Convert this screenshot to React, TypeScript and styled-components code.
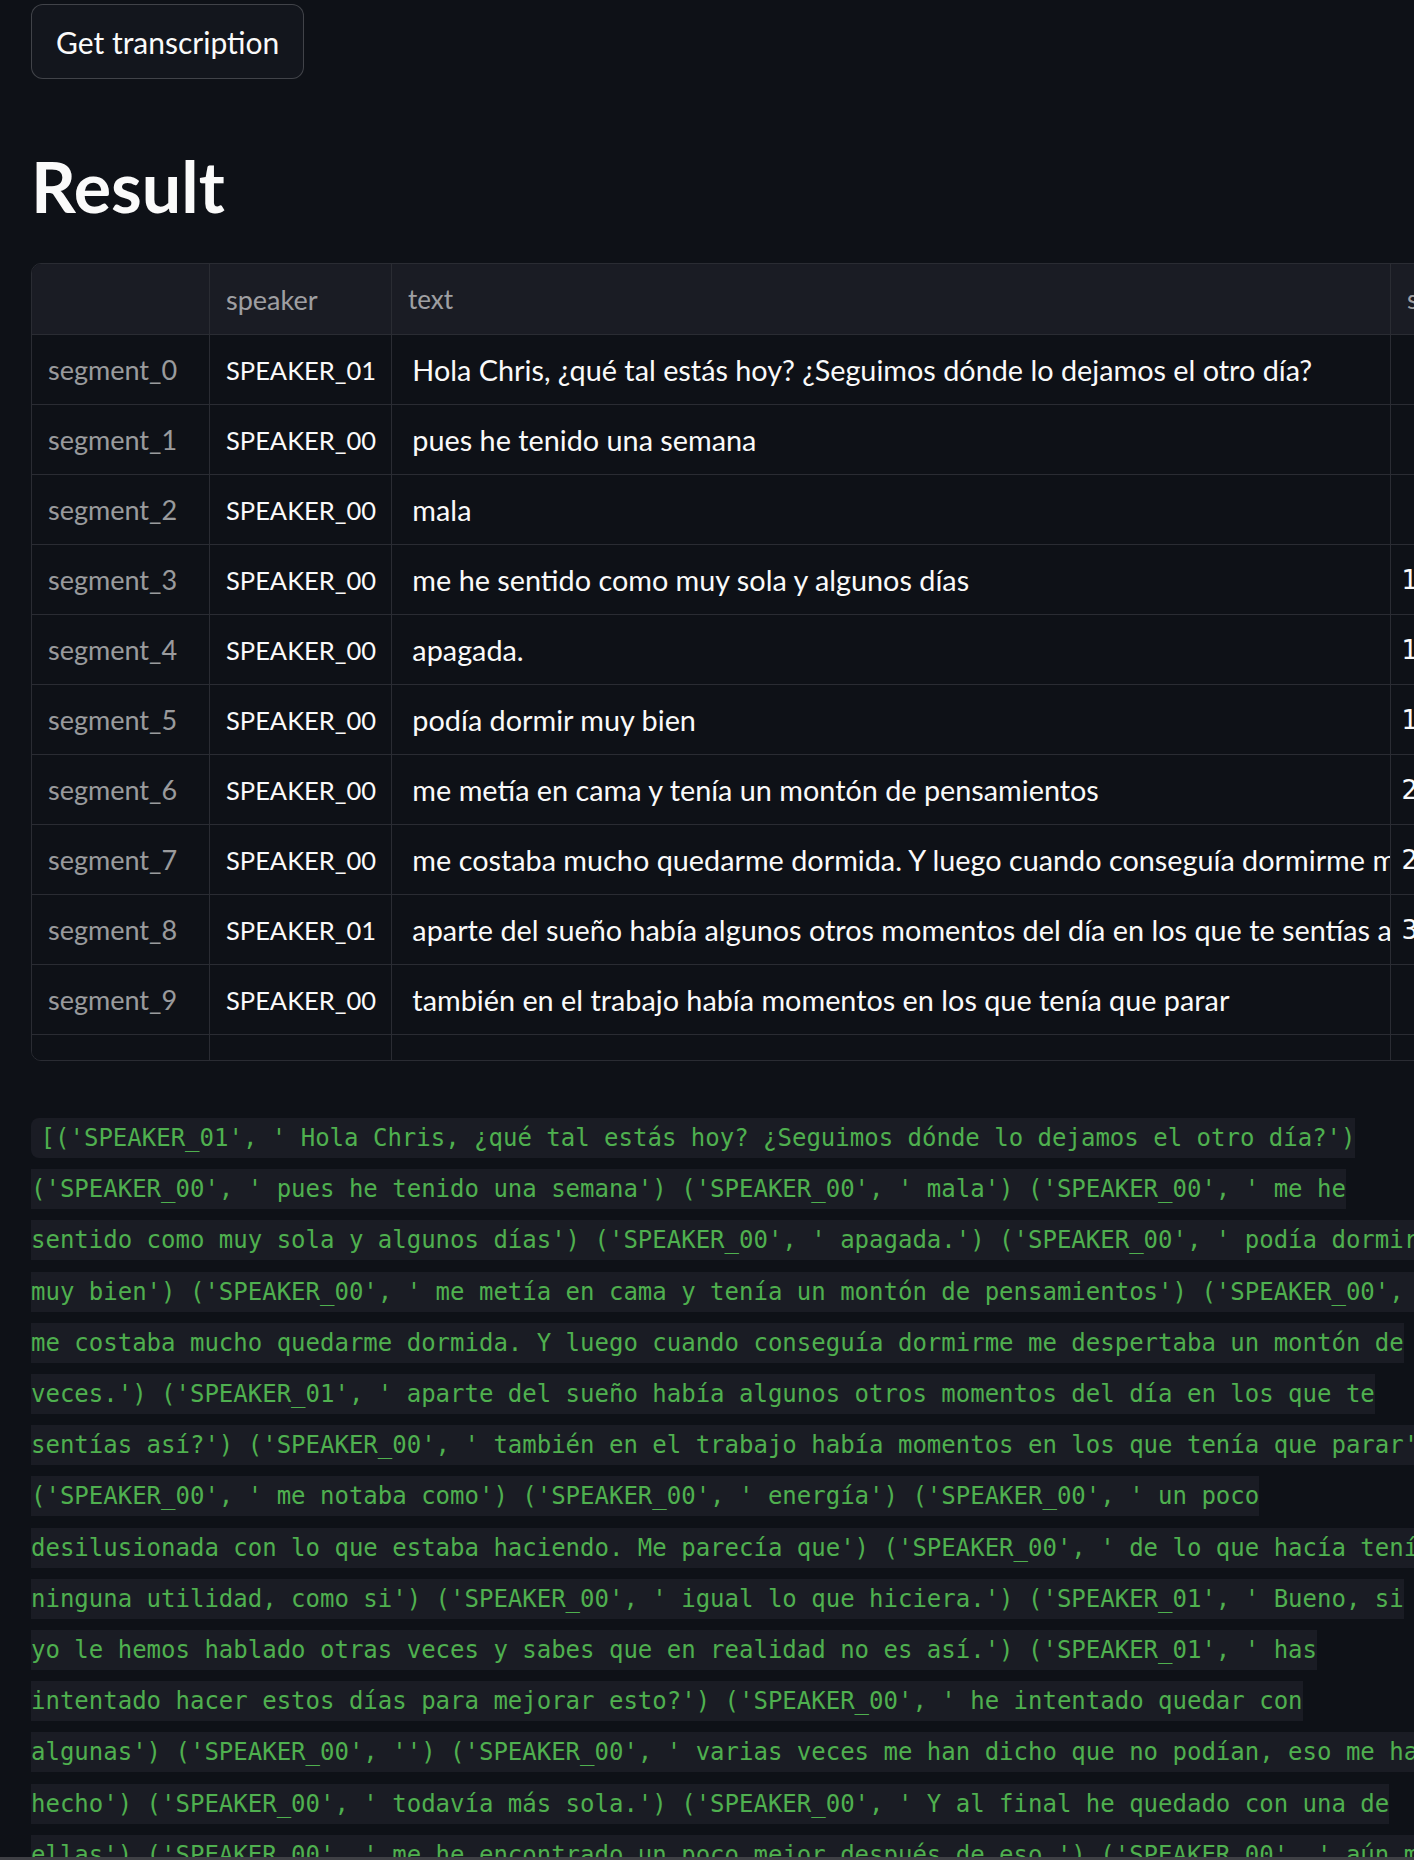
import styled, { createGlobalStyle } from "styled-components";

type Segment = {
  speaker: string;
  text: string;
  start: string;
};

const segments: Segment[] = [
  { speaker: "SPEAKER_01", text: " Hola Chris, ¿qué tal estás hoy? ¿Seguimos dónde lo dejamos el otro día?", start: "0.0310" },
  { speaker: "SPEAKER_00", text: " pues he tenido una semana", start: "4.6540" },
  { speaker: "SPEAKER_00", text: " mala", start: "7.1300" },
  { speaker: "SPEAKER_00", text: " me he sentido como muy sola y algunos días", start: "10.2500" },
  { speaker: "SPEAKER_00", text: " apagada.", start: "13.4300" },
  { speaker: "SPEAKER_00", text: " podía dormir muy bien", start: "15.9800" },
  { speaker: "SPEAKER_00", text: " me metía en cama y tenía un montón de pensamientos", start: "20.1600" },
  {
    speaker: "SPEAKER_00",
    text: " me costaba mucho quedarme dormida. Y luego cuando conseguía dormirme me despertaba un montón de veces.",
    start: "25.3400",
  },
  {
    speaker: "SPEAKER_01",
    text: " aparte del sueño había algunos otros momentos del día en los que te sentías así?",
    start: "31.0900",
  },
  { speaker: "SPEAKER_00", text: " también en el trabajo había momentos en los que tenía que parar", start: "9.8700" },
  { speaker: "SPEAKER_00", text: " me notaba como", start: "4.5100" },
  { speaker: "SPEAKER_00", text: " energía", start: "4.0200" },
];

const transcript: [string, string][] = [
  ["SPEAKER_01", " Hola Chris, ¿qué tal estás hoy? ¿Seguimos dónde lo dejamos el otro día?"],
  ["SPEAKER_00", " pues he tenido una semana"],
  ["SPEAKER_00", " mala"],
  ["SPEAKER_00", " me he sentido como muy sola y algunos días"],
  ["SPEAKER_00", " apagada."],
  ["SPEAKER_00", " podía dormir muy bien"],
  ["SPEAKER_00", " me metía en cama y tenía un montón de pensamientos"],
  ["SPEAKER_00", " me costaba mucho quedarme dormida. Y luego cuando conseguía dormirme me despertaba un montón de veces."],
  ["SPEAKER_01", " aparte del sueño había algunos otros momentos del día en los que te sentías así?"],
  ["SPEAKER_00", " también en el trabajo había momentos en los que tenía que parar"],
  ["SPEAKER_00", " me notaba como"],
  ["SPEAKER_00", " energía"],
  ["SPEAKER_00", " un poco desilusionada con lo que estaba haciendo. Me parecía que"],
  ["SPEAKER_00", " de lo que hacía tenía ninguna utilidad, como si"],
  ["SPEAKER_00", " igual lo que hiciera."],
  ["SPEAKER_01", " Bueno, si yo le hemos hablado otras veces y sabes que en realidad no es así."],
  ["SPEAKER_01", " has intentado hacer estos días para mejorar esto?"],
  ["SPEAKER_00", " he intentado quedar con algunas"],
  ["SPEAKER_00", ""],
  ["SPEAKER_00", " varias veces me han dicho que no podían, eso me ha hecho"],
  ["SPEAKER_00", " todavía más sola."],
  ["SPEAKER_00", " Y al final he quedado con una de ellas"],
  ["SPEAKER_00", " me he encontrado un poco mejor después de eso."],
  ["SPEAKER_00", " aún me cuesta un poco, pero poco a poco voy mejorando."],
];

const transcriptText =
  "[" + transcript.map(([who, said]) => `('${who}', '${said}')`).join(" ") + "]";

const GlobalStyle = createGlobalStyle`
  html, body {
    margin: 0;
    padding: 0;
    background: #0e1117;
    overflow: hidden;
  }
`;

const Page = styled.div`
  height: 100vh;
  overflow: hidden;
  box-sizing: border-box;
  padding: 4px 0 0 31px;
  background: #0e1117;
  color: #fafafa;
  font-family: Lato, "Liberation Sans", sans-serif;
`;

const ActionButton = styled.button`
  display: flex;
  align-items: center;
  width: fit-content;
  height: 75px;
  padding: 0 24px;
  border: 1px solid rgba(250, 250, 250, 0.2);
  border-radius: 12px;
  background: #13161d;
  color: #fafafa;
  font-family: Lato, "Liberation Sans", sans-serif;
  font-size: 30px;
  cursor: pointer;
`;

const Heading = styled.h2`
  margin: 65px 0 0;
  font-size: 70px;
  line-height: 1.2;
  font-weight: 700;
  color: #fafafa;
`;

const Grid = styled.div`
  width: 1560px;
  height: 798px;
  margin-top: 35px;
  box-sizing: border-box;
  border: 1px solid #2a2c33;
  border-radius: 10px;
  overflow: hidden;
`;

const Row = styled.div<{ $header?: boolean }>`
  display: flex;
  height: ${(p) => (p.$header ? 71 : 70)}px;
  box-sizing: border-box;
  border-bottom: 1px solid #2a2c33;
  background: ${(p) => (p.$header ? "#1a1c24" : "#0e1117")};
`;

const Cell = styled.div<{ $width: number; $size?: number; $muted?: boolean; $inset?: number }>`
  flex: 0 0 ${(p) => p.$width}px;
  display: flex;
  align-items: center;
  box-sizing: border-box;
  padding: 0 16px 0 ${(p) => p.$inset ?? 16}px;
  border-right: 1px solid #2a2c33;
  overflow: hidden;
  white-space: pre;
  font-size: ${(p) => p.$size ?? 27}px;
  color: ${(p) => (p.$muted ? "rgba(250, 250, 250, 0.6)" : "#fafafa")};
`;

const NumberCell = styled(Cell)`
  justify-content: flex-end;
  font-family: "DejaVu Sans", sans-serif;
`;

const Output = styled.p`
  width: 1408px;
  margin: 52px 0 0;
  font-family: "DejaVu Sans Mono", "Liberation Mono", monospace;
  font-size: 24px;
  line-height: 51.2px;
`;

const InlineCode = styled.code`
  font: inherit;
  padding: 6px 9.6px;
  border-radius: 8px;
  background: #1a1c24;
  color: #4fb04f;
`;

const ScrollThumb = styled.div`
  position: fixed;
  left: 0;
  right: 0;
  bottom: 0;
  height: 3px;
  background: #3f4045;
`;

const columns = { index: 178, speaker: 182, text: 999, start: 135 };

export default function App() {
  return (
    <>
      <GlobalStyle />
      <Page>
        <ActionButton>Get transcription</ActionButton>
        <Heading>Result</Heading>
        <Grid>
          <Row $header>
            <Cell $width={columns.index} />
            <Cell $width={columns.speaker} $muted>
              speaker
            </Cell>
            <Cell $width={columns.text} $muted $size={26}>
              text
            </Cell>
            <Cell $width={columns.start} $muted $size={26}>
              start
            </Cell>
          </Row>
          {segments.map((s, i) => (
            <Row key={i}>
              <Cell $width={columns.index} $muted>
                segment_{i}
              </Cell>
              <Cell $width={columns.speaker} $size={25.5}>
                {s.speaker}
              </Cell>
              <Cell $width={columns.text} $size={28.8} $inset={13}>
                {s.text}
              </Cell>
              <NumberCell $width={columns.start} $size={26}>
                {s.start}
              </NumberCell>
            </Row>
          ))}
        </Grid>
        <Output>
          <InlineCode>{transcriptText}</InlineCode>
        </Output>
      </Page>
      <ScrollThumb />
    </>
  );
}
